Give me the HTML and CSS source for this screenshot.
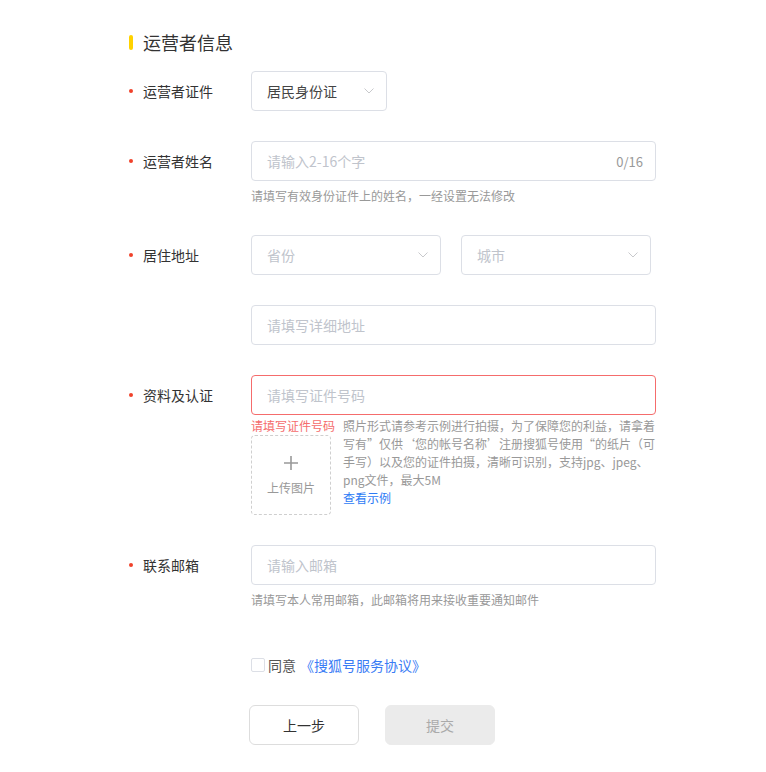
FILE: index.html
```html
<!DOCTYPE html>
<html lang="zh">
<head>
<meta charset="utf-8">
<title>运营者信息</title>
<link rel="stylesheet" href="styles.css">
</head>
<body>
<div class="page">
  <div class="title"><span class="title-bar"></span><span class="title-text">运营者信息</span></div>

  <div class="row r1">
    <div class="label"><span class="dot"></span>运营者证件</div>
    <div class="field">
      <div class="select sel-id"><span class="val">居民身份证</span><svg class="chev" width="10" height="6" viewBox="0 0 10 6"><path d="M0.5 0.5 L5 5 L9.5 0.5" fill="none" stroke="#c8c9cc" stroke-width="1"/></svg></div>
    </div>
  </div>

  <div class="row r2">
    <div class="label"><span class="dot"></span>运营者姓名</div>
    <div class="field">
      <div class="input"><span class="ph">请输入2-16个字</span><span class="count">0/16</span></div>
      <div class="help">请填写有效身份证件上的姓名，一经设置无法修改</div>
    </div>
  </div>

  <div class="row r3">
    <div class="label"><span class="dot"></span>居住地址</div>
    <div class="field">
      <div class="pair">
        <div class="select sel-half"><span class="ph">省份</span><svg class="chev" width="10" height="6" viewBox="0 0 10 6"><path d="M0.5 0.5 L5 5 L9.5 0.5" fill="none" stroke="#c8c9cc" stroke-width="1"/></svg></div>
        <div class="select sel-half"><span class="ph">城市</span><svg class="chev" width="10" height="6" viewBox="0 0 10 6"><path d="M0.5 0.5 L5 5 L9.5 0.5" fill="none" stroke="#c8c9cc" stroke-width="1"/></svg></div>
      </div>
    </div>
  </div>

  <div class="row r3b">
    <div class="label"></div>
    <div class="field">
      <div class="input"><span class="ph">请填写详细地址</span></div>
    </div>
  </div>

  <div class="row r4">
    <div class="label"><span class="dot"></span>资料及认证</div>
    <div class="field">
      <div class="input error"><span class="ph">请填写证件号码</span></div>
      <div class="upload-area">
        <div class="upload-left">
          <div class="err-text">请填写证件号码</div>
          <div class="upload-box">
            <svg class="plus" width="16" height="16" viewBox="0 0 16 16"><path d="M8 1 V15 M1 8 H15" stroke="#999" stroke-width="1.6" fill="none"/></svg>
            <div class="upload-text">上传图片</div>
          </div>
        </div>
        <div class="desc">
          <div>照片形式请参考示例进行拍摄，为了保障您的利益，请拿着写有”仅供‘您的帐号名称’注册搜狐号使用“的纸片（可手写）以及您的证件拍摄，清晰可识别，支持jpg、jpeg、png文件，最大5M</div>
          <a class="link" href="#">查看示例</a>
        </div>
      </div>
    </div>
  </div>

  <div class="row r5">
    <div class="label"><span class="dot"></span>联系邮箱</div>
    <div class="field">
      <div class="input"><span class="ph">请输入邮箱</span></div>
      <div class="help">请填写本人常用邮箱，此邮箱将用来接收重要通知邮件</div>
    </div>
  </div>

  <div class="agree">
    <span class="checkbox"></span><span class="agree-text">同意</span><a class="agree-link" href="#">《搜狐号服务协议》</a>
  </div>

  <div class="buttons">
    <button class="btn btn-prev">上一步</button>
    <button class="btn btn-submit">提交</button>
  </div>
</div>
</body>
</html>
```
FILE: styles.css
```css
* { box-sizing: border-box; }
body {
  margin: 0;
  background: #fff;
  font-family: "Noto Sans CJK SC", "Microsoft YaHei", sans-serif;
  color: #333;
}
.page {
  padding: 30px 0 0 129px;
  width: 766px;
}
.title {
  display: flex;
  align-items: center;
  height: 24px;
}
.title-bar {
  width: 4px;
  height: 15px;
  border-radius: 2px;
  background: #ffd200;
}
.title-text {
  margin-left: 10px;
  font-size: 18px;
  line-height: 24px;
  color: #333;
}
.row {
  display: flex;
}
.r1 { margin-top: 17px; }
.r2, .r3, .r3b, .r4, .r5 { margin-top: 30px; }
.label {
  width: 122px;
  flex-shrink: 0;
  height: 40px;
  display: flex;
  align-items: center;
  font-size: 14px;
  color: #333;
}
.dot {
  width: 4px;
  height: 4px;
  border-radius: 50%;
  background: #f0412a;
  margin-right: 10px;
}
.field {
  width: 405px;
}
.input, .select {
  height: 40px;
  border: 1px solid #dcdfe6;
  border-radius: 4px;
  display: flex;
  align-items: center;
  padding: 0 12px 0 15px;
  font-size: 14px;
}
.input.error {
  border-color: #f56c6c;
}
.ph {
  color: #c0c4cc;
  flex: 1;
}
.val {
  color: #444;
  flex: 1;
}
.count {
  font-size: 13px;
  color: #999;
}
.sel-id {
  width: 136px;
}
.pair {
  display: flex;
  gap: 20px;
}
.sel-half {
  width: 190px;
}
.chev {
  flex-shrink: 0;
}
.help {
  margin-top: 6px;
  font-size: 12px;
  line-height: 18px;
  color: #999;
}
.upload-area {
  display: flex;
  margin-top: 2px;
}
.upload-left {
  width: 92px;
  flex-shrink: 0;
}
.err-text {
  font-size: 12px;
  line-height: 18px;
  color: #f56c6c;
  white-space: nowrap;
}
.upload-box {
  width: 80px;
  height: 80px;
  border: 1px dashed #cfcfcf;
  border-radius: 4px;
  display: flex;
  flex-direction: column;
  align-items: center;
  padding-top: 19px;
}
.plus {
  display: block;
}
.upload-text {
  margin-top: 9px;
  font-size: 12px;
  line-height: 16px;
  color: #999;
}
.desc {
  width: 313px;
  font-size: 12px;
  line-height: 18px;
  color: #999;
}
.link {
  display: block;
  color: #2d7bf5;
  text-decoration: none;
}
.agree {
  margin-top: 49px;
  margin-left: 122px;
  display: flex;
  align-items: center;
  height: 14px;
  font-size: 14px;
}
.checkbox {
  width: 14px;
  height: 14px;
  border: 1px solid #dcdfe6;
  border-radius: 2px;
  background: #fff;
}
.agree-text {
  margin-left: 3px;
  color: #555;
}
.agree-link {
  margin-left: 4px;
  color: #3a7cf5;
  text-decoration: none;
}
.buttons {
  margin-top: 33px;
  margin-left: 120px;
  display: flex;
  gap: 26px;
}
.btn {
  width: 110px;
  height: 40px;
  border-radius: 6px;
  font-family: inherit;
  font-size: 14px;
  cursor: pointer;
}
.btn-prev {
  background: #fff;
  border: 1px solid #dddddd;
  color: #333;
}
.btn-submit {
  background: #ebebeb;
  border: 1px solid #ebebeb;
  color: #aaa;
}
```
